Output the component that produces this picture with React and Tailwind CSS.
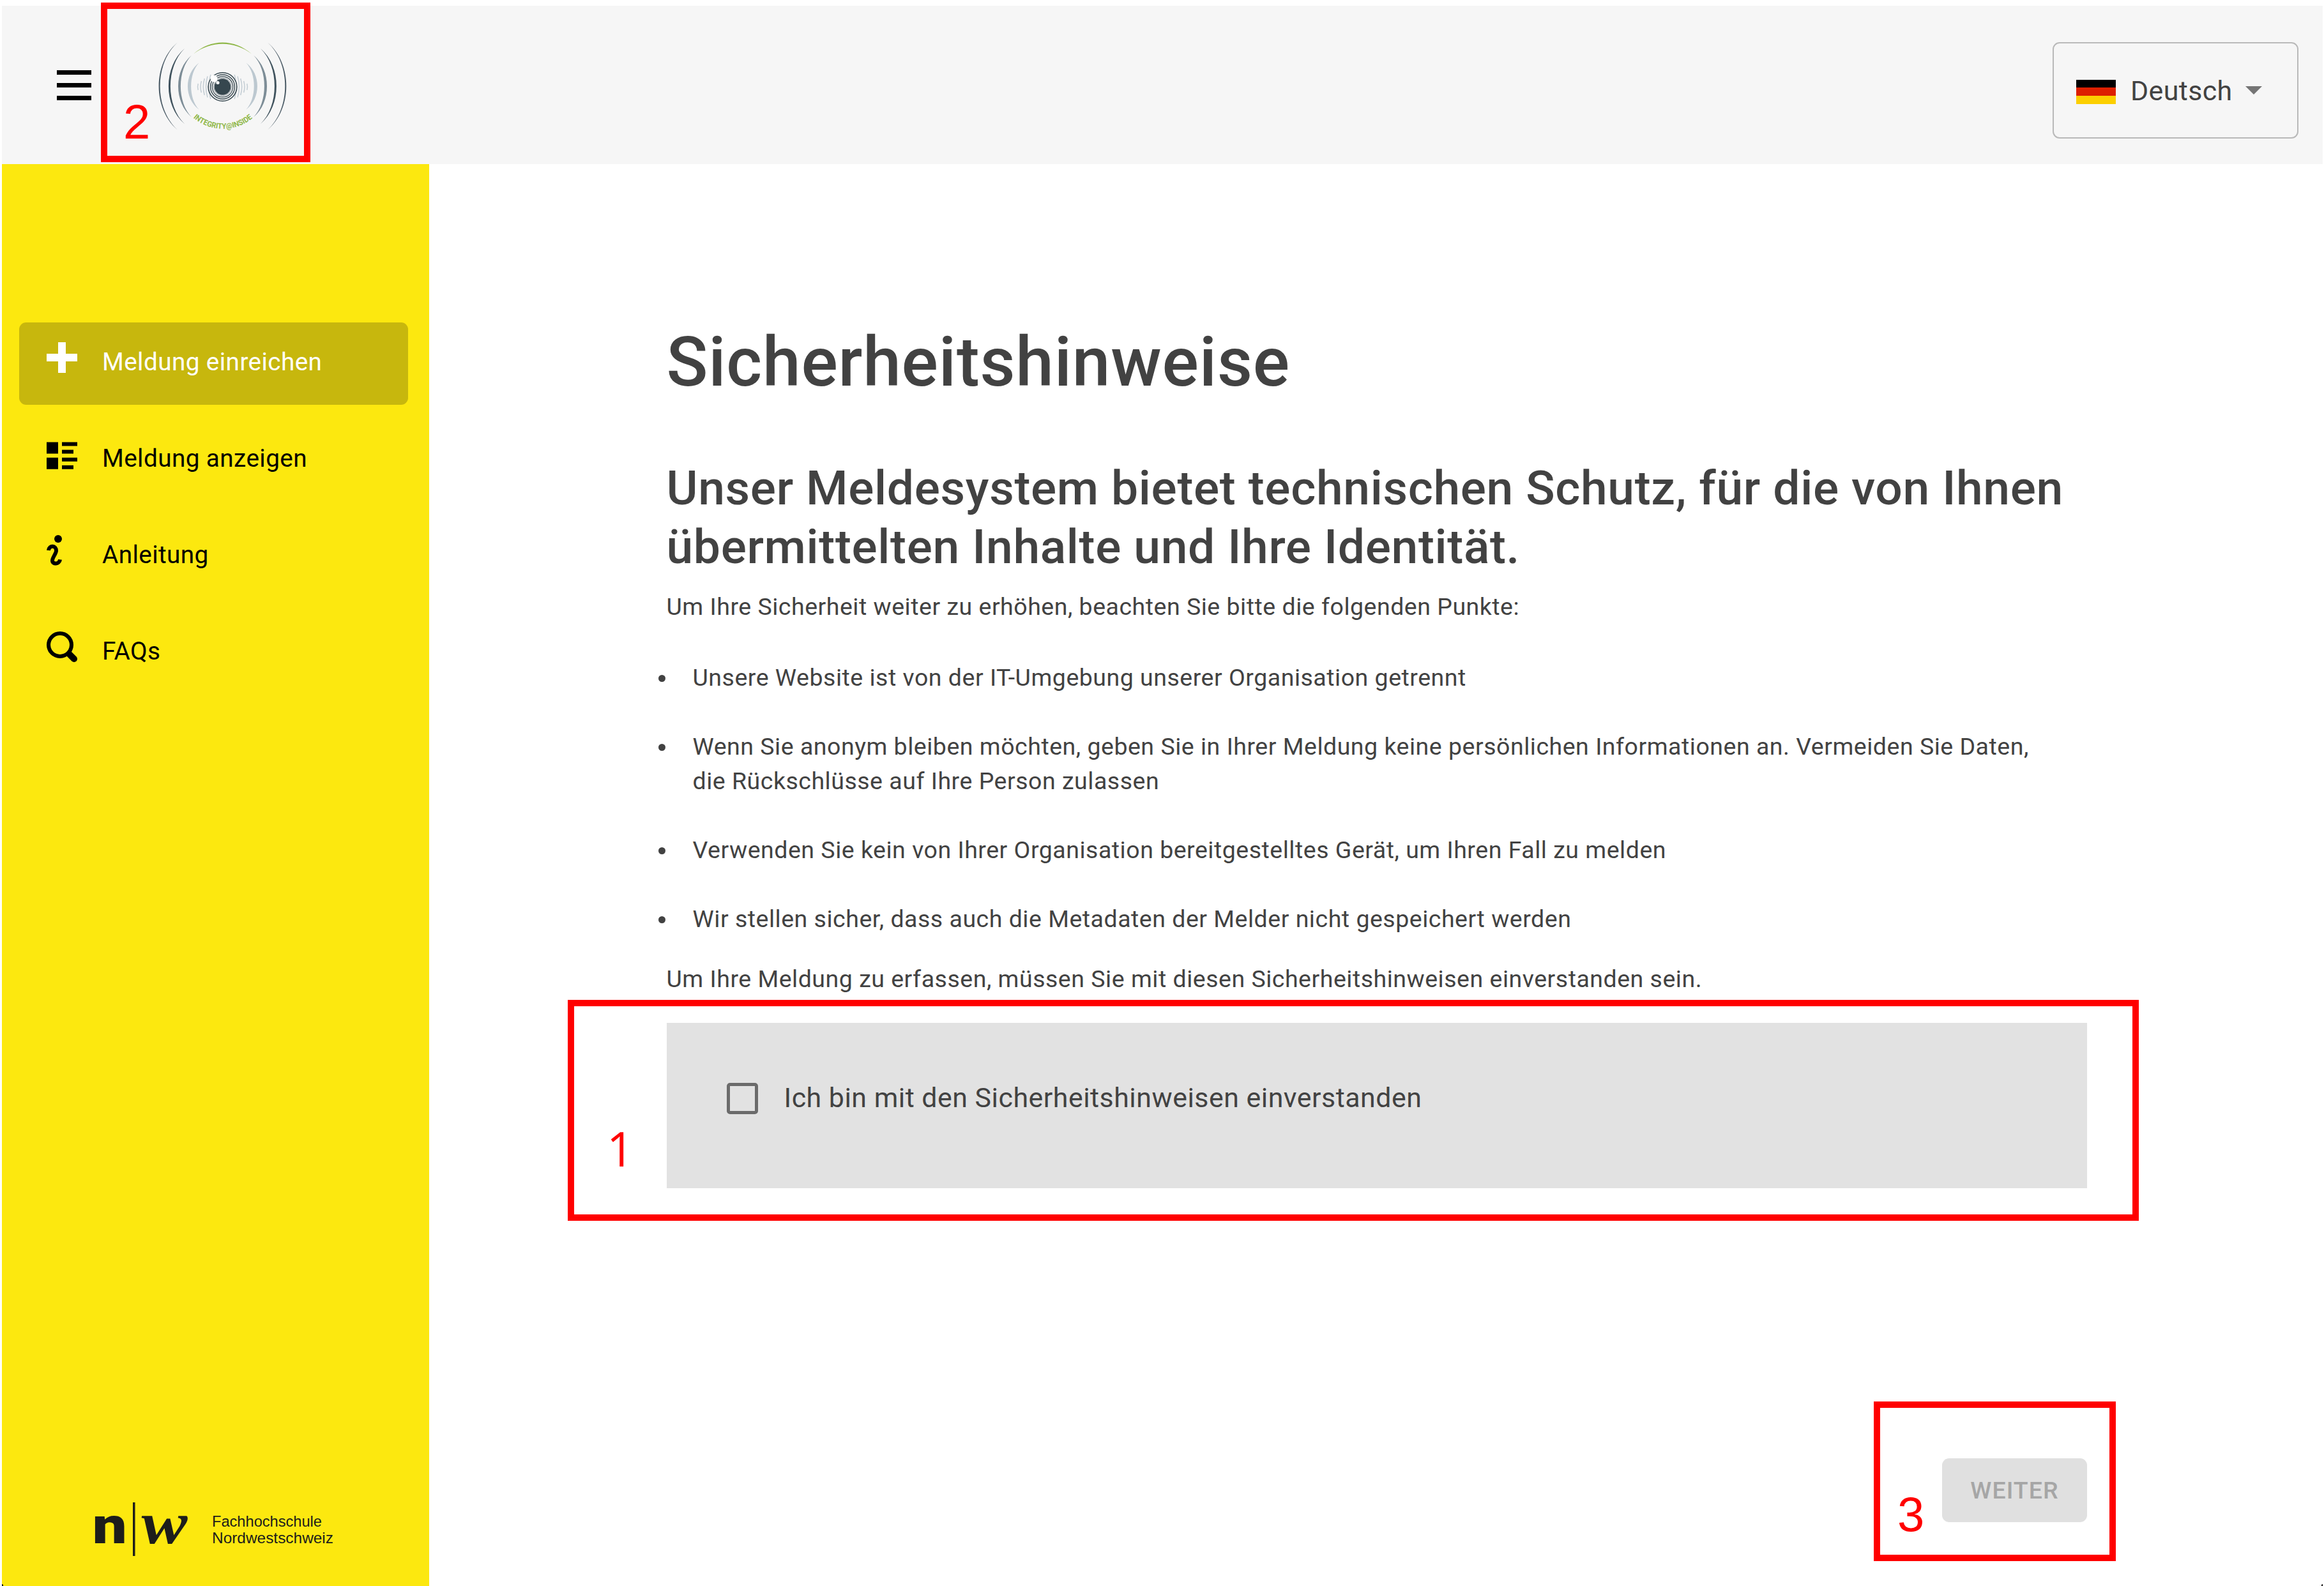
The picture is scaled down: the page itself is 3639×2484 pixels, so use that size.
import React from "react";

function Menu() {
  return (
    <div className="flex w-[54px] flex-col gap-[13px]">
      <div className="h-[7px] bg-black" />
      <div className="h-[7px] bg-black" />
      <div className="h-[7px] bg-black" />
    </div>
  );
}

// Crescent-shaped arc: two curves that share both end points.
function Arc({ side, x, top, end, thick, color }) {
  const cx = 118.5;
  const s = side === "left" ? 1 : -1;
  const X = (v) => (s === 1 ? v : 2 * cx - v);
  const mid = 95;
  const bottom = 2 * mid - top;
  const c = (peak) => end - ((end - peak) * 4) / 3;
  const c1 = c(x);
  const c2 = c(x + thick);
  const k = (bottom - top) * 0.24;
  return (
    <path
      fill={color}
      d={`M${X(end)} ${top}C${X(c1)} ${top + k} ${X(c1)} ${bottom - k} ${X(end)} ${bottom}C${X(c2)} ${bottom - k} ${X(c2)} ${top + k} ${X(end)} ${top}Z`}
    />
  );
}

function EyeLogo() {
  const arcs = [
    { x: 18.6, top: 26.5, end: 48, thick: 2, color: "#4a5a65" },
    { x: 34, top: 36, end: 59, thick: 3, color: "#3f525d" },
    { x: 49, top: 46.5, end: 70, thick: 4, color: "#7d8d97" },
    { x: 64, top: 58.5, end: 81.5, thick: 5.2, color: "#bcc8d0" },
  ];
  const bars = [
    [79.5, 5], [84, 9], [88.3, 13], [92.5, 16.5], [97, 19],
  ];
  return (
    <svg width="240" height="190" viewBox="0 0 240 190" className="block">
      {arcs.map((a) => (
        <React.Fragment key={a.x}>
          <Arc side="left" {...a} />
          <Arc side="right" {...a} />
        </React.Fragment>
      ))}
      <path d="M73 44.500C100 20.500 137 20.500 164 44.500C137 23.500 100 23.500 73 44.500Z" fill="#8fb748" />
      {bars.map(([x, h]) => (
        <g key={x} fill="none" stroke="#c3cdd4" strokeWidth="1.5">
          <path d={`M${x + h * 0.15} ${96 - h}Q${x - h * 0.15} 96 ${x + h * 0.15} ${96 + h}`} />
          <path d={`M${237 - x - h * 0.15} ${96 - h}Q${237 - x + h * 0.15} 96 ${237 - x - h * 0.15} ${96 + h}`} />
        </g>
      ))}
      <circle cx="118.500" cy="96" r="23.200" fill="#f6f6f6" />
      <g fill="none" stroke="#36474f">
        <circle cx="118.500" cy="96" r="22.300" strokeWidth="1.600" />
        <circle cx="118.500" cy="96" r="19" strokeWidth="1.400" />
        <circle cx="118.500" cy="96" r="16.200" strokeWidth="1.200" />
      </g>
      <circle cx="118.500" cy="96" r="14" fill="none" stroke="#6d7b83" strokeWidth=".8" />
      <circle cx="118.500" cy="96" r="12.800" fill="#36474f" />
      <circle cx="105" cy="83" r="5.500" fill="#fff" />
      <circle cx="111" cy="89.500" r="2.600" fill="#fff" />
      <path id="tag" d="M72.500 144.500A72 72 0 0 0 166 144.500" fill="none" />
      <text fontFamily="Roboto" fontSize="12" fontWeight="700" fill="#8fb748">
        <textPath href="#tag" textLength="101" lengthAdjust="spacingAndGlyphs">INTEGRITY@INSIDE</textPath>
      </text>
    </svg>
  );
}

function Plus() {
  return (
    <svg width="48" height="48" viewBox="0 0 48 48" fill="currentColor">
      <path d="M18 0h12v18h18v12H30v18H18V30H0V18h18z" />
    </svg>
  );
}

function ListIcon() {
  return (
    <svg width="48" height="48" viewBox="0 0 48 48" fill="currentColor">
      <path d="M0 5.500h18v18H0zM0 29.700h18v18H0zM24 5.500h24v6H24zM24 17.500h18v6H24zM24 29.700h24v6H24zM24 41.700h18v6H24z" />
    </svg>
  );
}

function InfoIcon() {
  return (
    <svg width="48" height="48" viewBox="0 0 48 48" fill="none">
      <circle cx="18" cy="6" r="6" fill="currentColor" />
      <path d="M3 24C4 15.600 15 15.600 15 24.500C15 29 9 35 9 40C9 46.300 20 46.300 21 38.300" stroke="currentColor" strokeWidth="6" />
    </svg>
  );
}

function SearchIcon() {
  return (
    <svg width="48" height="48" viewBox="0 0 48 48" fill="none" stroke="currentColor">
      <circle cx="21" cy="21" r="18" strokeWidth="6" />
      <path d="M36 36l7 7" strokeWidth="10" strokeLinecap="round" />
    </svg>
  );
}

const nav = [
  { label: "Meldung einreichen", Icon: Plus, active: true },
  { label: "Meldung anzeigen", Icon: ListIcon },
  { label: "Anleitung", Icon: InfoIcon },
  { label: "FAQs", Icon: SearchIcon },
];

function NwLogo() {
  return (
    <svg width="410" height="150" viewBox="-10 -30 410 150" className="block text-[#1d1d1b]">
      <text x="-3.300" y="73.500" fontFamily="Roboto" fontWeight="900" fontSize="80" fill="currentColor" textLength="54" lengthAdjust="spacingAndGlyphs">n</text>
      <rect x="60" y="10" width="3.500" height="84" fill="currentColor" />
      <text x="73.500" y="73.500" fontFamily="Liberation Serif" fontStyle="italic" fontWeight="700" fontSize="94" fill="currentColor" textLength="72" lengthAdjust="spacingAndGlyphs">w</text>
      <text x="184" y="48" fontFamily="Liberation Sans" fontSize="24.500" fill="currentColor" textLength="172" lengthAdjust="spacingAndGlyphs">Fachhochschule</text>
      <text x="184" y="73.500" fontFamily="Liberation Sans" fontSize="24.500" fill="currentColor" textLength="190" lengthAdjust="spacingAndGlyphs">Nordwestschweiz</text>
    </svg>
  );
}

const points = [
  "Unsere Website ist von der IT-Umgebung unserer Organisation getrennt",
  "Wenn Sie anonym bleiben möchten, geben Sie in Ihrer Meldung keine persönlichen Informationen an. Vermeiden Sie Daten, die Rückschlüsse auf Ihre Person zulassen",
  "Verwenden Sie kein von Ihrer Organisation bereitgestelltes Gerät, um Ihren Fall zu melden",
  "Wir stellen sicher, dass auch die Metadaten der Melder nicht gespeichert werden",
];

export default function App() {
  return (
    <div className="relative flex h-[2484px] w-[3639px] flex-col overflow-hidden bg-white pl-[3px] pt-[9px] font-['Roboto',sans-serif] text-[#424242]">
      <header className="flex h-[248px] w-[3634px] shrink-0 items-start bg-[#f6f6f6]">
        <div className="ml-[86px] mt-[101px]"><Menu /></div>
        <div className="ml-[87px] mt-[31px]"><EyeLogo /></div>
        <div className="ml-auto mr-[38px] mt-[57px] flex h-[151px] w-[385px] items-center rounded-[11px] border-2 border-[#b9b9b9] pl-[35px]">
          <div className="mt-[4px] flex h-[38px] w-[62px] flex-col">
            <div className="flex-1 bg-black" />
            <div className="flex-1 bg-[#dd1f00]" />
            <div className="flex-1 bg-[#fccf00]" />
          </div>
          <span className="ml-[23px] mt-[2px] text-[42.900px] leading-none tracking-[0.00938em]">Deutsch</span>
          <svg width="26" height="13" viewBox="0 0 26 13" className="ml-[20px] fill-[#757575]"><path d="M0 0h26L13 13z" /></svg>
        </div>
      </header>

      <div className="flex min-h-0 flex-1">
        <aside className="flex w-[669px] shrink-0 flex-col bg-[#fce80f] text-black">
          <nav className="flex flex-col gap-[22px] pl-[27px] pt-[248px]">
            {nav.map(({ label, Icon, active }) => (
              <a key={label} className={active ? "flex h-[129px] w-[609px] rounded-[11px] bg-[#c7b70d] pl-[43px] text-white" : "flex h-[129px] w-[609px] pl-[43px]"}>
                <span className="mt-[31px] h-[48px] w-[48px]"><Icon /></span>
                <span className="ml-[39px] mt-[35px] text-[38.700px] leading-[54px] tracking-[0.01071em]">{label}</span>
              </a>
            ))}
          </nav>
          <div className="mb-[21px] ml-[135px] mt-auto"><NwLogo /></div>
        </aside>

        <main className="flex w-[2596px] flex-col pl-[371.500px]">
          <h1 className="mt-[248px] text-[107.200px] font-medium leading-[125px] tracking-[0.00735em]">Sicherheitshinweise</h1>
          <h2 className="mt-[88px] w-[2224px] text-[75px] font-medium leading-[92px] tracking-[0.0085em]">
            Unser Meldesystem bietet technischen Schutz, für die von Ihnen übermittelten Inhalte und Ihre Identität.
          </h2>
          <p className="mt-[21px] text-[37.500px] leading-[54px] tracking-[0.0135em]">
            Um Ihre Sicherheit weiter zu erhöhen, beachten Sie bitte die folgenden Punkte:
          </p>
          <ul className="mt-[57px] flex flex-col gap-[54px]">
            {points.map((t) => (
              <li key={t} className="-ml-[13px] flex w-[2190px] text-[37.500px] leading-[54px] tracking-[0.0135em]">
                <span className="mr-[43px] mt-[23px] h-[11px] w-[11px] shrink-0 rounded-full bg-[#424242]" />
                <span>{t}</span>
              </li>
            ))}
          </ul>
          <p className="mt-[40px] text-[37.500px] leading-[54px] tracking-[0.0135em]">
            Um Ihre Meldung zu erfassen, müssen Sie mit diesen Sicherheitshinweisen einverstanden sein.
          </p>
          <label className="mt-[42px] flex h-[259px] shrink-0 items-start bg-[#e2e2e2] pl-[94px] pt-[94px]">
            <span className="h-[49px] w-[49px] rounded-[5px] border-[5px] border-[#6b6b6b]" />
            <span className="-mt-px ml-[41px] text-[42.900px] leading-[48px] tracking-[0.0115em]">Ich bin mit den Sicherheitshinweisen einverstanden</span>
          </label>
          <button className="ml-auto mt-[423px] h-[100px] w-[227px] shrink-0 rounded-[11px] bg-[#e0e0e0] text-[37.500px] font-medium tracking-[0.02857em] text-[#a6a6a6]">
            WEITER
          </button>
        </main>
      </div>

      <span className="absolute bottom-0 left-[3px] h-[3px] w-[2px] rounded-tr-full bg-black" />
      <span className="absolute bottom-0 right-[2px] h-[3px] w-[2px] rounded-tl-full bg-black" />

      <div className="absolute left-[158px] top-[4px] h-[250px] w-[328px] border-[10px] border-[#ff0000]" />
      <div className="absolute left-[889px] top-[1566px] h-[346px] w-[2460px] border-[10px] border-[#ff0000]" />
      <div className="absolute left-[2934px] top-[2195px] h-[250px] w-[379px] border-[10px] border-[#ff0000]" />
      <span className="absolute left-[193px] top-[149px] font-['Liberation_Sans',sans-serif] text-[76px] leading-[84px] text-[#ff0000]">2</span>
      <span className="absolute left-[950px] top-[1756px] font-['Open_Sans',sans-serif] text-[74.500px] font-medium leading-[84px] text-[#ff0000]">1</span>
      <span className="absolute left-[2971px] top-[2330px] font-['Liberation_Sans',sans-serif] text-[76px] leading-[84px] text-[#ff0000]">3</span>
    </div>
  );
}
